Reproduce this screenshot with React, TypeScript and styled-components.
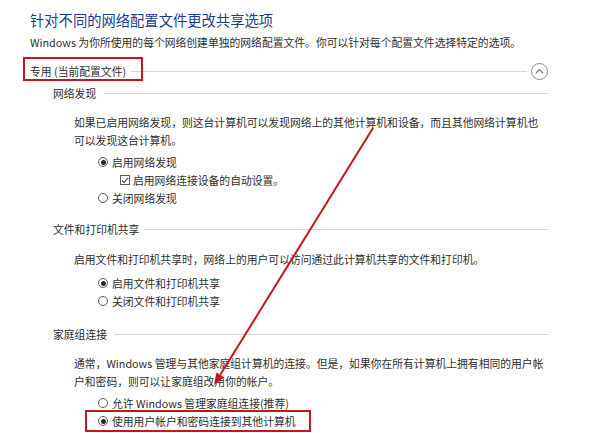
import React from "react"
import styled, { createGlobalStyle } from "styled-components"

const GlobalStyle = createGlobalStyle`
	html, body {
		margin: 0;
		padding: 0;
		background: #ffffff;
	}
	body {
		font-family: "Noto Sans CJK SC", "Noto Sans", sans-serif;
		color: #2e2e2e;
	}
`

const Page = styled.div`
	position: relative;
	width: 600px;
	height: 433px;
	overflow: hidden;
	box-sizing: border-box;
	padding: 10px 52px 0 30px;
	font-size: 10.8px;
`

const Title = styled.div`
	font-size: 14.3px;
	line-height: 20px;
	color: #1e3c8c;
`

const Desc = styled.div`
	margin-top: 3px;
	line-height: 18px;
`

const GroupHeader = styled.div`
	margin-top: 9px;
	height: 22px;
	display: flex;
	align-items: center;
`

const Annotated = styled.span<{ $left: number; $top: number; $w: number; $h: number }>`
	position: relative;
	&::after {
		content: '';
		position: absolute;
		left: ${p => p.$left}px;
		top: ${p => p.$top}px;
		width: ${p => p.$w}px;
		height: ${p => p.$h}px;
		border: 2px solid #c4161c;
		box-sizing: border-box;
		pointer-events: none;
	}
`

const Rule = styled.div<{ $gap: number }>`
	flex: 1;
	height: 1px;
	background: #d6d6d6;
	margin-left: ${p => p.$gap}px;
`

const Chevron = styled.div`
	width: 17px;
	height: 17px;
	margin-left: 4px;
	border: 1px solid #8c8c8c;
	border-radius: 50%;
	box-sizing: border-box;
	display: flex;
	align-items: center;
	justify-content: center;
`

const SubHeader = styled.div<{ $mt: number }>`
	margin-top: ${p => p.$mt}px;
	margin-left: 23px;
	height: 18px;
	display: flex;
	align-items: center;
`

const Para = styled.p<{ $mt: number }>`
	margin: ${p => p.$mt}px 0 0 44px;
	line-height: 18px;
	white-space: nowrap;
`

const Options = styled.div<{ $mt: number }>`
	margin-top: ${p => p.$mt}px;
	margin-left: 68px;
	display: flex;
	flex-direction: column;
`

const Option = styled.div<{ $indent?: number }>`
	position: relative;
	height: 18px;
	display: flex;
	align-items: center;
	padding-left: ${p => p.$indent || 0}px;
`

const Radio = styled.span<{ $on?: boolean }>`
	width: 10px;
	height: 10px;
	border: 1px solid #5a5a5a;
	border-radius: 50%;
	box-sizing: border-box;
	margin-right: 4px;
	display: flex;
	align-items: center;
	justify-content: center;
	&::after {
		content: '';
		display: ${p => (p.$on ? "block" : "none")};
		width: 5px;
		height: 5px;
		border-radius: 50%;
		background: #2a2a2a;
	}
`

const Check = styled.span`
	width: 10px;
	height: 10px;
	border: 1px solid #5a5a5a;
	box-sizing: border-box;
	margin-right: 3px;
	display: flex;
	align-items: center;
	justify-content: center;
`

const Arrow = styled.svg`
	position: absolute;
	left: 0;
	top: 0;
	pointer-events: none;
`

export default function App() {
	return (
		<>
			<GlobalStyle />
			<Page>
				<Title>针对不同的网络配置文件更改共享选项</Title>
				<Desc>Windows 为你所使用的每个网络创建单独的网络配置文件。你可以针对每个配置文件选择特定的选项。</Desc>

				<GroupHeader>
					<Annotated $left={-7} $top={-6} $w={120} $h={24}>专用 (当前配置文件)</Annotated>
					<Rule $gap={5} />
					<Chevron>
						<svg width="9" height="6" viewBox="0 0 9 6">
							<path d="M1 5 L4.5 1.5 L8 5" fill="none" stroke="#7a7a7a" strokeWidth="1.2" />
						</svg>
					</Chevron>
				</GroupHeader>

				<SubHeader $mt={2}>
					网络发现
					<Rule $gap={8} />
				</SubHeader>
				<Para $mt={11}>
					如果已启用网络发现，则这台计算机可以发现网络上的其他计算机和设备，而且其他网络计算机也
					<br />
					可以发现这台计算机。
				</Para>
				<Options $mt={4}>
					<Option><Radio $on />启用网络发现</Option>
					<Option $indent={22}>
						<Check>
							<svg width="8" height="7" viewBox="0 0 8 7">
								<path d="M1 3.5 L3 5.5 L7 1" fill="none" stroke="#333" strokeWidth="1.1" />
							</svg>
						</Check>
						启用网络连接设备的自动设置。
					</Option>
					<Option><Radio />关闭网络发现</Option>
				</Options>

				<SubHeader $mt={13}>
					文件和打印机共享
					<Rule $gap={6} />
				</SubHeader>
				<Para $mt={12}>启用文件和打印机共享时，网络上的用户可以访问通过此计算机共享的文件和打印机。</Para>
				<Options $mt={6}>
					<Option><Radio $on />启用文件和打印机共享</Option>
					<Option><Radio />关闭文件和打印机共享</Option>
				</Options>

				<SubHeader $mt={15}>
					家庭组连接
					<Rule $gap={7} />
				</SubHeader>
				<Para $mt={11}>
					通常，Windows 管理与其他家庭组计算机的连接。但是，如果你在所有计算机上拥有相同的用户帐
					<br />
					户和密码，则可以让家庭组改用你的帐户。
				</Para>
				<Options $mt={4}>
					<Option><Radio />允许 Windows 管理家庭组连接(推荐)</Option>
					<Option>
						<Annotated $left={-13} $top={-11} $w={226} $h={22} />
						<Radio $on />使用用户帐户和密码连接到其他计算机
					</Option>
				</Options>

				<Arrow width="600" height="433" viewBox="0 0 600 433">
					<line x1="373" y1="128" x2="220.3" y2="374.8" stroke="#c4161c" strokeWidth="2" />
					<polygon points="214,385 224.2,377.2 216.4,372.4" fill="#c4161c" />
				</Arrow>
			</Page>
		</>
	)
}
